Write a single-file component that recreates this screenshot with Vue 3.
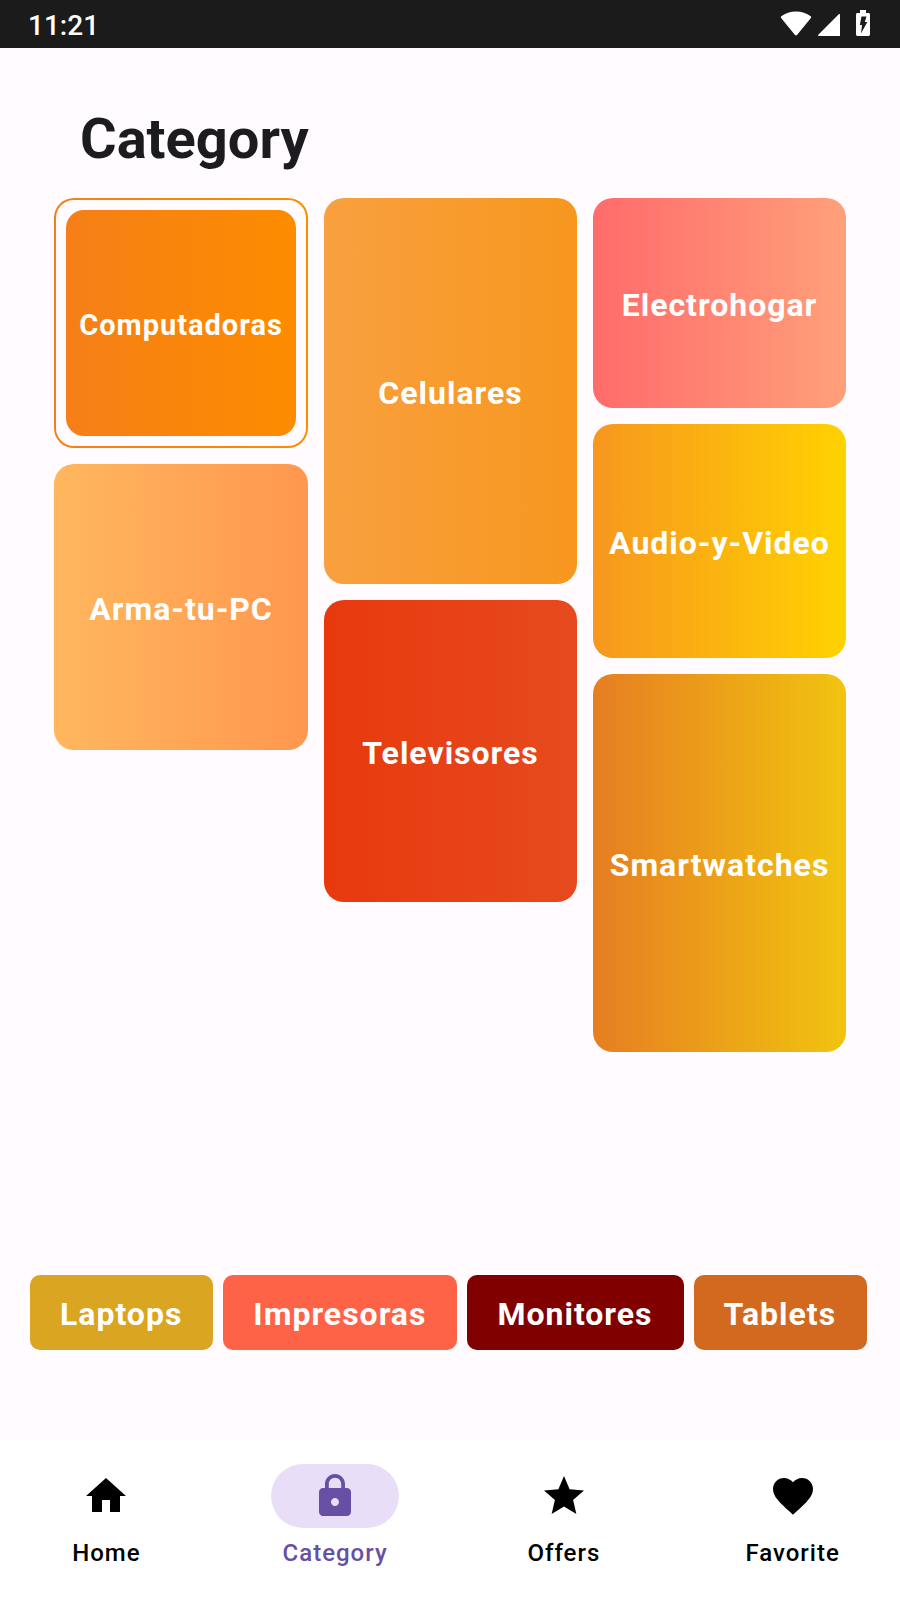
<script setup>
import { ref } from 'vue'

const columns = [
  [
    { name: 'Computadoras', tone: 'computadoras' },
    { name: 'Arma-tu-PC', tone: 'arma' },
  ],
  [
    { name: 'Celulares', tone: 'celulares' },
    { name: 'Televisores', tone: 'televisores' },
  ],
  [
    { name: 'Electrohogar', tone: 'electrohogar' },
    { name: 'Audio-y-Video', tone: 'audio' },
    { name: 'Smartwatches', tone: 'smartwatches' },
  ],
]

const chips = [
  { name: 'Laptops', tone: 'laptops' },
  { name: 'Impresoras', tone: 'impresoras' },
  { name: 'Monitores', tone: 'monitores' },
  { name: 'Tablets', tone: 'tablets' },
]

const tabs = [
  { name: 'Home', icon: 'M10 20v-6h4v6h5v-8h3L12 3 2 12h3v8z' },
  {
    name: 'Category',
    icon: 'M18 8h-1V6c0-2.76-2.24-5-5-5S7 3.24 7 6v2H6c-1.1 0-2 .9-2 2v10c0 1.1.9 2 2 2h12c1.1 0 2-.9 2-2V10c0-1.1-.9-2-2-2zm-6 9c-1.1 0-2-.9-2-2s.9-2 2-2 2 .9 2 2-.9 2-2 2zm3.1-9H8.9V6c0-1.71 1.39-3.1 3.1-3.1 1.71 0 3.1 1.39 3.1 3.1v2z',
  },
  {
    name: 'Offers',
    icon: 'M12 17.27L18.18 21l-1.64-7.03L22 9.24l-7.19-.61L12 2 9.19 8.63 2 9.24l5.46 4.73L5.82 21z',
  },
  {
    name: 'Favorite',
    icon: 'M12 21.35l-1.45-1.32C5.4 15.36 2 12.28 2 8.5 2 5.42 4.42 3 7.5 3c1.74 0 3.41.81 4.5 2.09C13.09 3.81 14.76 3 16.5 3 19.58 3 22 5.42 22 8.5c0 3.78-3.4 6.86-8.55 11.54L12 21.35z',
  },
]

const selected = ref('Computadoras')
const activeTab = ref('Category')
</script>

<template>
  <div class="screen">
    <header class="status">
      <time class="clock">11:21</time>
      <div class="signals">
        <svg width="32" height="26" viewBox="0 0 32 26" aria-label="Wi-Fi">
          <path d="M1.3 6.3C5.4 3.2 10.4 1.5 16 1.5s10.6 1.7 14.7 4.8c.6.5.7 1.1.2 1.7L17.2 24.8c-.7.9-1.7.9-2.4 0L1.1 8c-.5-.6-.4-1.2.2-1.7z" />
        </svg>
        <svg width="22" height="26" viewBox="0 0 22 26" aria-label="Signal">
          <path d="M22 4.8V26H.8c-.8 0-1-.8-.5-1.3L20.5 4.4c.6-.6 1.5-.4 1.5.4z" />
        </svg>
        <svg class="battery" width="14" height="26" viewBox="0 0 14 26" aria-label="Battery charging">
          <path fill-rule="evenodd" d="M4 0h6v3h2.6c.8 0 1.4.6 1.4 1.4v20.2c0 .8-.6 1.4-1.4 1.4H1.4C.6 26 0 25.4 0 24.6V4.4C0 3.6.6 3 1.4 3H4zM5.5 6.5L3.8 15H6l-1 8.500L11.300 12H8.800l1.700-5.500z" />
        </svg>
      </div>
    </header>

    <main class="content">
      <h1 class="title">Category</h1>
      <div class="board">
        <div v-for="(column, i) in columns" :key="i" class="column">
          <button
            v-for="card in column"
            :key="card.name"
            type="button"
            class="card"
            :class="[card.tone, { selected: selected === card.name }]"
            :aria-pressed="selected === card.name"
            @click="selected = card.name"
          >
            <span class="face">{{ card.name }}</span>
          </button>
        </div>
      </div>
      <div class="chips">
        <button v-for="chip in chips" :key="chip.name" type="button" class="chip" :class="chip.tone">
          {{ chip.name }}
        </button>
      </div>
    </main>

    <nav class="tabs">
      <button
        v-for="tab in tabs"
        :key="tab.name"
        type="button"
        class="tab"
        :class="{ active: activeTab === tab.name }"
        @click="activeTab = tab.name"
      >
        <span class="pill">
          <svg width="48" height="48" viewBox="0 0 24 24" aria-hidden="true"><path :d="tab.icon" /></svg>
        </span>
        <span class="label">{{ tab.name }}</span>
      </button>
    </nav>
  </div>
</template>

<style>
body {
  margin: 0;
  background: #fffbff;
}
</style>

<style scoped>
.screen {
  display: flex;
  flex-direction: column;
  min-height: 100vh;
  font-family: Roboto, sans-serif;
  color: #1c1b1f;
}
button {
  border: 0;
  padding: 0;
  font: inherit;
  color: inherit;
  background: none;
  cursor: pointer;
}
.status {
  display: flex;
  align-items: center;
  justify-content: space-between;
  box-sizing: border-box;
  height: 48px;
  padding: 0 30px 0 28px;
  background: #1b1b1b;
  color: #fff;
}
.clock {
  padding-top: 3px;
  font-size: 28px;
  font-weight: 500;
  line-height: 32px;
}
.signals {
  display: flex;
  gap: 6px;
  padding-bottom: 2px;
  fill: #fff;
}
.battery {
  margin-left: 10px;
}
.content {
  display: flex;
  flex: 1;
  flex-direction: column;
}
.title {
  margin: 58px 80px 26px;
  font-size: 56px;
  font-weight: 700;
  line-height: 66px;
}
.board {
  display: grid;
  grid-template-columns: 254fr 253fr 253fr;
  align-items: start;
  gap: 16px;
  padding: 0 54px;
}
.column {
  display: flex;
  flex-direction: column;
  gap: 16px;
}
.card {
  display: flex;
  box-sizing: border-box;
  border-radius: 20px;
  background: linear-gradient(90deg, var(--from), var(--to));
}
.face {
  display: flex;
  flex: 1;
  align-items: center;
  justify-content: center;
  align-self: stretch;
  padding-top: 4px;
  border-radius: 18px;
  color: #fff;
  font-size: 32px;
  font-weight: 700;
  letter-spacing: 1px;
}
.selected {
  border: 2px solid transparent;
  padding: 10px;
  background:
    linear-gradient(#fffbff, #fffbff) padding-box,
    linear-gradient(90deg, var(--from), var(--to)) border-box;
}
.selected .face {
  background: linear-gradient(90deg, var(--from), var(--to));
  font-size: 29px;
}
.computadoras { --from: #f57f17; --to: #fd8c00; height: 250px; }
.arma { --from: #ffb75e; --to: #ff974f; height: 286px; }
.celulares { --from: #f9a03f; --to: #f7971e; height: 386px; }
.televisores { --from: #e8390d; --to: #e64a1e; height: 302px; }
.electrohogar { --from: #ff6b6b; --to: #ffa07a; height: 210px; }
.audio { --from: #f7971e; --to: #ffd200; height: 234px; }
.smartwatches { --from: #e67e22; --to: #f1c40f; height: 378px; }
.chips {
  display: flex;
  gap: 10px;
  margin-top: auto;
  padding: 32px 30px 90px;
}
.chip {
  flex: none;
  padding: 20px 31px 17px 30px;
  border-radius: 10px;
  color: #fff;
  font-size: 32px;
  font-weight: 700;
  line-height: 38px;
  letter-spacing: 1px;
}
.laptops { background: #daa520; }
.impresoras { background: #ff6347; }
.monitores { background: #800000; }
.tablets { background: #d2691e; }
.tabs {
  display: grid;
  grid-template-columns: repeat(4, minmax(0, 1fr));
  gap: 16px;
  padding: 24px 1px 31px 0;
  background: #fff;
  color: #000;
}
.tab {
  display: flex;
  flex-direction: column;
  align-items: center;
  gap: 9px;
}
.pill {
  display: flex;
  align-items: center;
  justify-content: center;
  width: 128px;
  height: 64px;
  border-radius: 32px;
}
.pill svg {
  fill: currentColor;
}
.label {
  font-size: 24px;
  font-weight: 500;
  line-height: 32px;
  letter-spacing: 1px;
}
.active {
  color: #6750a4;
}
.active .pill {
  background: #e8def8;
}
</style>
